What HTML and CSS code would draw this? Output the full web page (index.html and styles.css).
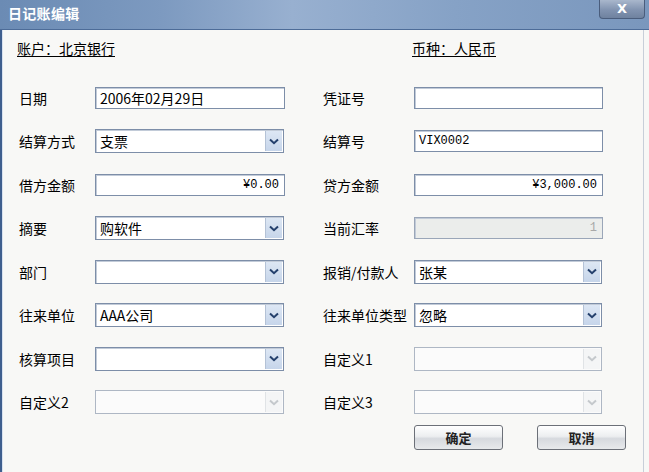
FILE: index.html
```html
<!DOCTYPE html>
<html lang="zh">
<head>
<meta charset="utf-8">
<title>日记账编辑</title>
<link rel="stylesheet" href="styles.css">
</head>
<body>
<div class="window">
  <div class="titlebar">
    <span class="title">日记账编辑</span>
    <span class="close">X</span>
  </div>
  <div class="content">
    <div class="header">
      <span class="hd-left">账户：北京银行</span>
      <span class="hd-right">币种：人民币</span>
    </div>
    <div class="form">
      <span class="lbl">日期</span>
      <div class="field"><span class="txt">2006年02月29日</span></div>
      <span></span>
      <span class="lbl">凭证号</span>
      <div class="field"></div>

      <span class="lbl">结算方式</span>
      <div class="field sel"><span class="txt">支票</span><span class="btn"><svg width="10" height="7" viewBox="0 0 10 7"><path d="M1 1.5 L5 5.2 L9 1.5" fill="none" stroke="#24406c" stroke-width="2"/></svg></span></div>
      <span></span>
      <span class="lbl">结算号</span>
      <div class="field"><span class="txt mono">VIX0002</span></div>

      <span class="lbl">借方金额</span>
      <div class="field right"><span class="txt mono">¥0.00</span></div>
      <span></span>
      <span class="lbl">贷方金额</span>
      <div class="field right"><span class="txt mono">¥3,000.00</span></div>

      <span class="lbl">摘要</span>
      <div class="field sel"><span class="txt">购软件</span><span class="btn"><svg width="10" height="7" viewBox="0 0 10 7"><path d="M1 1.5 L5 5.2 L9 1.5" fill="none" stroke="#24406c" stroke-width="2"/></svg></span></div>
      <span></span>
      <span class="lbl">当前汇率</span>
      <div class="field right disabled"><span class="txt mono grey">1</span></div>

      <span class="lbl">部门</span>
      <div class="field sel"><span class="txt"></span><span class="btn"><svg width="10" height="7" viewBox="0 0 10 7"><path d="M1 1.5 L5 5.2 L9 1.5" fill="none" stroke="#24406c" stroke-width="2"/></svg></span></div>
      <span></span>
      <span class="lbl">报销/付款人</span>
      <div class="field sel"><span class="txt">张某</span><span class="btn"><svg width="10" height="7" viewBox="0 0 10 7"><path d="M1 1.5 L5 5.2 L9 1.5" fill="none" stroke="#24406c" stroke-width="2"/></svg></span></div>

      <span class="lbl">往来单位</span>
      <div class="field sel"><span class="txt">AAA公司</span><span class="btn"><svg width="10" height="7" viewBox="0 0 10 7"><path d="M1 1.5 L5 5.2 L9 1.5" fill="none" stroke="#24406c" stroke-width="2"/></svg></span></div>
      <span></span>
      <span class="lbl">往来单位类型</span>
      <div class="field sel"><span class="txt">忽略</span><span class="btn"><svg width="10" height="7" viewBox="0 0 10 7"><path d="M1 1.5 L5 5.2 L9 1.5" fill="none" stroke="#24406c" stroke-width="2"/></svg></span></div>

      <span class="lbl">核算项目</span>
      <div class="field sel"><span class="txt"></span><span class="btn"><svg width="10" height="7" viewBox="0 0 10 7"><path d="M1 1.5 L5 5.2 L9 1.5" fill="none" stroke="#24406c" stroke-width="2"/></svg></span></div>
      <span></span>
      <span class="lbl">自定义1</span>
      <div class="field sel off"><span class="txt"></span><span class="btn"><svg width="10" height="7" viewBox="0 0 10 7"><path d="M1 1.5 L5 5.2 L9 1.5" fill="none" stroke="#c4c8cc" stroke-width="2"/></svg></span></div>

      <span class="lbl">自定义2</span>
      <div class="field sel off"><span class="txt"></span><span class="btn"><svg width="10" height="7" viewBox="0 0 10 7"><path d="M1 1.5 L5 5.2 L9 1.5" fill="none" stroke="#c4c8cc" stroke-width="2"/></svg></span></div>
      <span></span>
      <span class="lbl">自定义3</span>
      <div class="field sel off"><span class="txt"></span><span class="btn"><svg width="10" height="7" viewBox="0 0 10 7"><path d="M1 1.5 L5 5.2 L9 1.5" fill="none" stroke="#c4c8cc" stroke-width="2"/></svg></span></div>
    </div>
    <div class="actions">
      <button class="button">确定</button>
      <button class="button">取消</button>
    </div>
  </div>
</div>
</body>
</html>
```

FILE: styles.css
```css
html, body {
  margin: 0;
  padding: 0;
  background: #f7f8f5;
}
.window {
  width: 649px;
  height: 472px;
  box-sizing: border-box;
  display: flex;
  flex-direction: column;
  font-family: "Noto Sans CJK SC", "Noto Sans", sans-serif;
  color: #000;
  background: #3f5f8e;
}
.titlebar {
  height: 29px;
  flex: none;
  display: flex;
  align-items: flex-start;
  background: linear-gradient(90deg, #6b8bb4 0%, #7d9ac0 25%, #98b0d0 45%, #86a2c6 70%, #7a97bd 100%);
  border-bottom: 1px solid #4d6c98;
}
.title {
  color: #fff;
  font-size: 14px;
  font-weight: bold;
  line-height: 14px;
  padding: 6px 0 0 8px;
  letter-spacing: 0.3px;
}
.close {
  margin-left: auto;
  margin-right: 4px;
  width: 46px;
  height: 19px;
  box-sizing: border-box;
  border: 1px solid #4a5d7c;
  border-top: none;
  border-radius: 0 0 4px 4px;
  background: linear-gradient(180deg, #a9b7cc 0%, #8193b0 55%, #6f829f 100%);
  color: #fff;
  font-family: "DejaVu Sans", sans-serif;
  font-weight: bold;
  font-size: 13px;
  line-height: 18px;
  text-align: center;
}
.content {
  flex: 1;
  margin-left: 2px;
  border-left: 1px solid #d8e2f0;
  background: #f8f8f6;
  display: flex;
  flex-direction: column;
  box-shadow: inset -5px 0 0 #f8f8f6, inset -6px 0 0 #c8cfd9;
}
.header {
  display: grid;
  grid-template-columns: 395px 1fr;
  padding: 9px 0 0 14px;
  font-size: 14px;
  line-height: 18px;
  height: 18px;
}
.hd-left, .hd-right {
  text-decoration: underline;
  text-underline-offset: 2px;
}
.form {
  display: grid;
  grid-template-columns: 77px 190px 37px 92px 189px;
  grid-auto-rows: 43.5px;
  align-items: center;
  padding: 19px 0 0 15px;
}
.lbl {
  font-size: 14px;
  line-height: 18px;
  padding-left: 1px;
  white-space: nowrap;
}
.field {
  height: 22px;
  box-sizing: border-box;
  border: 1px solid #7d8ea8;
  box-shadow: inset 1px 1px 0 #c2cbd8;
  background: #fff;
  display: flex;
  align-items: center;
  overflow: hidden;
}
.field.sel {
  height: 24px;
  margin-right: 1px;
}
.field.right {
  justify-content: flex-end;
}
.txt {
  flex: 1;
  font-size: 14px;
  line-height: 18px;
  padding-left: 4px;
  white-space: nowrap;
}
.right .txt {
  flex: none;
  padding: 0 5px 0 0;
}
.mono {
  font-family: "Liberation Mono", monospace;
  font-size: 12px;
}
.grey {
  color: #a8a8a8;
}
.disabled {
  background: #ebedeb;
  border-color: #9aa6b8;
}
.btn {
  width: 17px;
  height: 20px;
  margin-right: 1px;
  box-sizing: border-box;
  border-left: 1px solid #b4c2d6;
  background: linear-gradient(180deg, #dde7f4 0%, #c6d5ea 100%);
  display: flex;
  align-items: center;
  justify-content: center;
}
.off {
  border-color: #aeb7c4;
  box-shadow: none;
  background: #fbfbfb;
}
.off .btn {
  background: #f4f5f6;
  border-left-color: #e0e3e6;
}
.actions {
  display: flex;
  gap: 34px;
  padding: 1px 0 0 411px;
}
.button {
  width: 89px;
  height: 25px;
  box-sizing: border-box;
  border: 1px solid #6c7078;
  border-radius: 3px;
  background: linear-gradient(180deg, #ffffff 0%, #eceef0 45%, #d6d9de 55%, #e8eaec 100%);
  font-family: "Noto Sans CJK SC", sans-serif;
  font-size: 13px;
  font-weight: bold;
  color: #222;
  padding: 0;
  line-height: 22px;
}
```
